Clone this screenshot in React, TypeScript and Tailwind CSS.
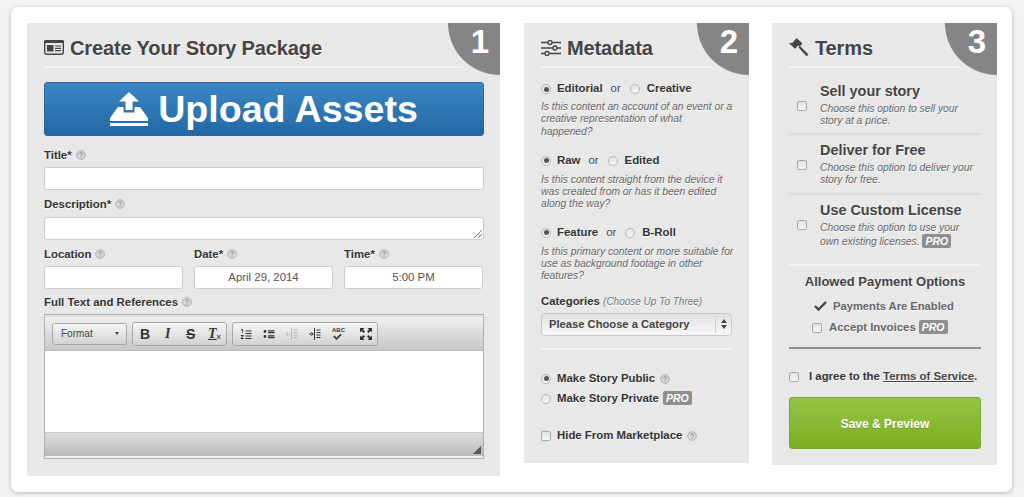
import type { ReactNode } from 'react';

const shadow = '[text-shadow:0_1px_0_rgba(255,255,255,0.8)]';

function Help({ className = '' }: { className?: string }) {
  return (
    <svg viewBox="0 0 11 11" className={`inline-block shrink-0 w-[10px] h-[10px] ${className}`}>
      <circle cx="5.5" cy="5.5" r="4.7" fill="#d8d8d8" stroke="#a8a8a8" strokeWidth="1" />
      <path d="M3.9 4.3c.1-1 .8-1.4 1.6-1.4.9 0 1.6.5 1.6 1.3 0 1.2-1.5 1.1-1.5 2.2" fill="none" stroke="#8c8c8c" strokeWidth="1" />
      <rect x="5" y="7.2" width="1.1" height="1.1" fill="#8c8c8c" />
    </svg>
  );
}

function Pro() {
  return (
    <span className="inline-block bg-[#8f8f8f] text-white text-[10.5px] leading-[14px] h-[14px] px-[3px] rounded-[2px] font-bold italic [text-shadow:none]">
      PRO
    </span>
  );
}

function Radio({ on = false }: { on?: boolean }) {
  return (
    <span className="shrink-0 w-[10px] h-[10px] rounded-full border border-[#b5b5b5] bg-gradient-to-b from-[#e4e4e4] to-[#f8f8f8] flex items-center justify-center">
      {on && <span className="w-[5px] h-[5px] rounded-full bg-[#555]" />}
    </span>
  );
}

function Check() {
  return <span className="shrink-0 block w-[10px] h-[10px] rounded-[2px] border border-[#a9a9a9] bg-gradient-to-b from-[#e2e2e2] to-[#f6f6f6]" />;
}

function Badge({ n }: { n: number }) {
  return (
    <div className="absolute top-0 right-0 w-[52px] h-[52px] bg-[#858585] rounded-bl-[52px] text-white font-bold text-[33px] leading-none pt-[2px] pr-[11px] text-right">
      {n}
    </div>
  );
}

function Heading({ icon, children, width }: { icon: ReactNode; children: ReactNode; width: string }) {
  return (
    <div className={`${width} h-[31px] border-b-2 border-[#f4f4f4] flex items-center gap-[6px] pb-[8px] text-[20px] tracking-[-0.12px] font-bold text-[#444] ${shadow}`}>
      {icon}
      <span>{children}</span>
    </div>
  );
}

function Label({ children, className = '' }: { children: ReactNode; className?: string }) {
  return (
    <div className={`text-[11.4px] leading-[14px] font-bold text-[#333] flex items-center gap-[4px] ${shadow} ${className}`}>
      {children}
    </div>
  );
}

function Field({ value, className = '' }: { value?: string; className?: string }) {
  return (
    <div className={`h-[23px] rounded-[3px] bg-white border border-[#ccc] text-[11.4px] text-[#555] flex items-center justify-center ${className}`}>
      {value}
    </div>
  );
}

function Choice({ a, b }: { a: string; b: string }) {
  return (
    <div className={`flex items-center h-[14px] text-[11.4px] text-[#333] ${shadow}`}>
      <Radio on />
      <b className="ml-[6px]">{a}</b>
      <span className="ml-[8px] text-[#444]">or</span>
      <span className="ml-[9px]"><Radio /></span>
      <b className="ml-[7px]">{b}</b>
    </div>
  );
}

function Hint({ children, className = '' }: { children: ReactNode; className?: string }) {
  return <p className={`text-[10.3px] leading-[12.3px] italic whitespace-nowrap text-[#666] ${shadow} ${className}`}>{children}</p>;
}

function Term({ title, children, className = '' }: { title: string; children: ReactNode; className?: string }) {
  return (
    <div className={`flex items-start ${className}`}>
      <span className="ml-[8px] mt-[18px]"><Check /></span>
      <div className="ml-[13px]">
        <div className={`text-[14.4px] leading-[17px] font-bold text-[#444] ${shadow}`}>{title}</div>
        <Hint className="mt-[3px]">{children}</Hint>
      </div>
    </div>
  );
}

function ToolGroup({ children, className = '' }: { children: ReactNode; className?: string }) {
  return (
    <div className={`h-[24px] flex items-center rounded-[3px] border border-[#a8a8a8] bg-gradient-to-b from-[#f6f6f6] to-[#d2d2d2] ${className}`}>
      {children}
    </div>
  );
}

function ListIcon({ kind, faded = false }: { kind: 'ol' | 'ul' | 'out' | 'in'; faded?: boolean }) {
  const c = faded ? '#b8b8b8' : '#333';
  return (
    <svg viewBox="0 0 12 12" className="w-[12px] h-[12px]" fill="none" stroke={c} strokeWidth="1.2">
      {kind === 'ol' && <path d="M1 1.5h1.4v3M1 7.5h2.4L1 10.5h2.5M5.500 3h6M5.500 5.500h6M5.500 8h6M5.500 10.500h6" strokeWidth="1" />}
      {kind === 'ul' && (
        <>
          <circle cx="2" cy="3.5" r="1.4" fill={c} stroke="none" />
          <circle cx="2" cy="8.5" r="1.4" fill={c} stroke="none" />
          <path d="M5 2.8h6.500M5 4.600h6.500M5 7.800h6.500M5 9.600h6.500" />
        </>
      )}
      {kind === 'out' && <path d="M5.500 0v12M7.500 2h4M7.500 4.500h4M7.500 7h4M7.500 9.500h4M0 6h4M2 4.200 .3 6 2 7.800" strokeWidth="1" />}
      {kind === 'in' && <path d="M5.500 0v12M7.500 2h4M7.500 4.500h4M7.500 7h4M7.500 9.500h4M0 6h4M2.400 4.200 4.200 6 2.400 7.800" strokeWidth="1" />}
    </svg>
  );
}

function Editor() {
  return (
    <div className="mt-[5px] h-[145px] border border-[#b0b0b0] flex flex-col bg-white">
      <div className="h-[35px] shrink-0 border-t-2 border-[#e4e4e4] bg-gradient-to-b from-[#f0f0f0] to-[#c8c8c8] flex items-center pl-[7px]">
        <ToolGroup className="w-[75px] !h-[22px] text-[10px] text-[#444] pl-[8px]">
          <span>Format</span>
          <span className="ml-auto mr-[7px] w-0 h-0 border-x-[2px] border-x-transparent border-t-[3px] border-t-[#444]" />
        </ToolGroup>
        <ToolGroup className="ml-[5px] w-[95px] text-[#333] font-bold text-[14px] leading-none">
          <span className="ml-[7px] w-[23px]">B</span>
          <span className="w-[23px] pl-[2px] italic [font-family:'Liberation_Serif',serif]">I</span>
          <span className="w-[22px] line-through">S</span>
          <span className="italic underline [font-family:'Liberation_Serif',serif]">T</span>
          <span className="text-[8px] mt-[7px] text-[#555]">x</span>
        </ToolGroup>
        <ToolGroup className="ml-[5px] w-[146px] gap-[11px] pl-[7px]">
          <ListIcon kind="ol" />
          <ListIcon kind="ul" />
          <ListIcon kind="out" faded />
          <ListIcon kind="in" />
          <span className="w-[19px] text-[6px] leading-[7px] font-bold text-[#333] flex flex-col">
            ABC
            <svg viewBox="0 0 12 6" className="w-[11px] h-[6px]"><path d="M2 2l3 3 5-5" fill="none" stroke="#333" strokeWidth="1.8" /></svg>
          </span>
          <svg viewBox="0 0 12 12" className="w-[12px] h-[12px] -ml-[2px]" fill="#333">
            <path d="M0 0h4.500L3 1.500l2 2-1.500 1.500-2-2L0 4.500zM12 0v4.500L10.500 3l-2 2L7 3.500l2-2L7.500 0zM0 12V7.500L1.500 9l2-2L5 8.500l-2 2L4.500 12zM12 12H7.500L9 10.500l-2-2L8.500 7l2 2L12 7.500z" />
          </svg>
        </ToolGroup>
      </div>
      <div className="flex-1 bg-white border-t border-[#bbb]" />
      <div className="h-[26px] shrink-0 border-t border-[#c8c8c8] border-b-2 border-b-[#eee] bg-gradient-to-b from-[#dedede] to-[#b9b9b9] flex items-end justify-end pr-[2px] pb-[2px]">
        <svg viewBox="0 0 8 8" className="w-[8px] h-[8px]"><path d="M8 0v8H0z" fill="#555" /></svg>
      </div>
    </div>
  );
}

export default function App() {
  return (
    <div className="w-[1024px] h-[497px] overflow-hidden bg-[#f3f3f3] pt-[7px] pl-[11px] [font-family:'Liberation_Sans',Arial,sans-serif]">
      <div className="w-[1001px] h-[485px] bg-white rounded-[7px] shadow-[0_1px_4px_rgba(0,0,0,0.25)] pt-[16px] pl-[16px] flex items-start">
        {/* Panel 1 */}
        <section className="relative w-[473px] h-[453px] bg-[#e8e8e8] pt-[14px] pl-[17px]">
          <Badge n={1} />
          <Heading
            width="w-[419px]"
            icon={
              <svg viewBox="0 0 20 15" className="w-[20px] h-[15px]">
                <rect x="0.7" y="0.7" width="18.600" height="13.600" rx="2" fill="#e8e8e8" stroke="#444" strokeWidth="1.400" />
                <rect x="0" y="0" width="20" height="3" rx="1.500" fill="#444" />
                <rect x="3" y="5" width="6.500" height="6.500" fill="#444" />
                <path d="M11 6h6M11 8.300h6M11 10.600h6" stroke="#444" strokeWidth="1.200" />
              </svg>
            }
          >
            Create Your Story Package
          </Heading>
          <div className="mt-[14px] w-[440px] h-[54px] rounded-[3px] border border-[#2a659b] bg-gradient-to-b from-[#3a87c4] to-[#2268a6] flex items-center justify-center gap-[10px] text-white text-[37.6px] font-bold">
            <svg viewBox="0 0 38 35" className="w-[38px] h-[35px]" fill="#fff">
              <path d="M19 0l10 9.500h-6.500V18h-7V9.500H9z" />
              <path d="M8 15h5.500v5.500h11V15H30l8 11v3H0v-3z" />
              <rect x="0" y="31" width="38" height="3" />
            </svg>
            <span>Upload Assets</span>
          </div>
          <Label className="mt-[12px]">Title* <Help /></Label>
          <Field className="mt-[5px] w-[440px]" />
          <Label className="mt-[7px]">Description* <Help /></Label>
          <div className="relative mt-[6px] w-[440px]">
            <Field />
            <svg viewBox="0 0 8 8" className="absolute right-[2px] bottom-[2px] w-[8px] h-[8px]"><path d="M0 8l8-8M4 8l4-4" stroke="#666" strokeWidth="0.900" /></svg>
          </div>
          <div className="mt-[7px] flex gap-[11px]">
            {[['Location', ''], ['Date*', 'April 29, 2014'], ['Time*', '5:00 PM']].map(([label, value]) => (
              <div key={label} className="w-[139px]">
                <Label>{label} <Help /></Label>
                <Field value={value} className="mt-[5px]" />
              </div>
            ))}
          </div>
          <Label className="mt-[6px]">Full Text and References <Help /></Label>
          <div className="w-[440px]"><Editor /></div>
        </section>

        {/* Panel 2 */}
        <section className="relative ml-[24px] w-[225px] h-[440px] bg-[#e8e8e8] pt-[14px] pl-[17px]">
          <Badge n={2} />
          <Heading
            width="w-[171px]"
            icon={
              <svg viewBox="0 0 20 16" className="w-[20px] h-[16px]" fill="none" stroke="#444" strokeWidth="1.300">
                <path d="M0 2.500h20M0 8h20M0 13.500h20" />
                <circle cx="9" cy="2.500" r="2" fill="#e8e8e8" />
                <circle cx="14" cy="8" r="2" fill="#e8e8e8" />
                <circle cx="6" cy="13.500" r="2" fill="#e8e8e8" />
              </svg>
            }
          >
            Metadata
          </Heading>
          <div className="w-[191px]">
            <div className="mt-[14px]"><Choice a="Editorial" b="Creative" /></div>
            <Hint className="mt-[5px]">Is this content an account of an event or a<br />creative representation of what<br />happened?</Hint>
            <div className="mt-[16px]"><Choice a="Raw" b="Edited" /></div>
            <Hint className="mt-[6px]">Is this content straight from the device it<br />was created from or has it been edited<br />along the way?</Hint>
            <div className="mt-[15px]"><Choice a="Feature" b="B-Roll" /></div>
            <Hint className="mt-[6px]">Is this primary content or more suitable for<br />use as background footage in other<br />features?</Hint>
            <div className={`mt-[11px] text-[11.4px] leading-[14px] text-[#333] ${shadow}`}>
              <b>Categories</b> <i className="text-[10px] text-[#777]">(Choose Up To Three)</i>
            </div>
            <div className="mt-[4px] h-[23px] rounded-[4px] border border-[#c8c8c8] bg-gradient-to-b from-[#e0e0e0] to-[#fafafa] flex items-center text-[11.2px] font-bold text-[#444] pl-[7px]">
              <span>Please Choose a Category</span>
              <div className="ml-auto w-[16px] h-[17px] border-l border-[#ccc] flex flex-col items-center justify-center gap-[2px]">
                <span className="w-0 h-0 border-x-[3px] border-x-transparent border-b-[4px] border-b-[#444]" />
                <span className="w-0 h-0 border-x-[3px] border-x-transparent border-t-[4px] border-t-[#444]" />
              </div>
            </div>
            <div className="mt-[12px] h-[2px] bg-[#f4f4f4]" />
            <div className={`mt-[22px] h-[14px] flex items-center gap-[6px] text-[11.4px] font-bold text-[#333] ${shadow}`}>
              <Radio on /><span>Make Story Public</span><Help className="-ml-[1px]" />
            </div>
            <div className={`mt-[6px] h-[14px] flex items-center gap-[6px] text-[11.4px] font-bold text-[#333] ${shadow}`}>
              <Radio /><span>Make Story Private</span><span className="-ml-[2px]"><Pro /></span>
            </div>
            <div className={`mt-[23px] h-[14px] flex items-center gap-[6px] text-[11.4px] font-bold text-[#333] ${shadow}`}>
              <Check /><span>Hide From Marketplace</span><Help className="-ml-[1px]" />
            </div>
          </div>
        </section>

        {/* Panel 3 */}
        <section className="relative ml-[23px] w-[225px] h-[442px] bg-[#e8e8e8] pt-[14px] pl-[17px]">
          <Badge n={3} />
          <Heading
            width="w-[171px]"
            icon={
              <svg viewBox="0 0 20 19" className="w-[20px] h-[19px]" fill="#444">
                <path d="M7.500 0l6 5.500-3 3.200-1.300-1.200-3.200 3.300L0 5.300l3.500-.6z" />
                <path d="M9.500 9.500l1.500-1.500 8.500 8.500-1.800 1.800z" />
              </svg>
            }
          >
            Terms
          </Heading>
          <div className="w-[192px]">
            <Term title="Sell your story" className="h-[67px] pt-[15px] border-b-2 border-[#dcdcdc]">
              Choose this option to sell your<br />story at a price.
            </Term>
            <Term title="Deliver for Free" className="h-[60px] pt-[7px] border-b-2 border-[#dcdcdc]">
              Choose this option to deliver your<br />story for free.
            </Term>
            <Term title="Use Custom License" className="h-[71px] pt-[7px] border-b-2 border-[#f4f4f4]">
              Choose this option to use your<br />own existing licenses. <Pro />
            </Term>
            <div className={`mt-[8px] text-center text-[13px] leading-[16px] font-bold text-[#444] ${shadow}`}>Allowed Payment Options</div>
            <div className={`mt-[9px] h-[14px] flex items-center pl-[25px] gap-[6px] text-[11.2px] font-bold text-[#666] ${shadow}`}>
              <svg viewBox="0 0 13 10" className="w-[13px] h-[10px]"><path d="M1 5l3.500 3.500L12 1" fill="none" stroke="#444" strokeWidth="2.400" /></svg>
              <span>Payments Are Enabled</span>
            </div>
            <div className={`mt-[8px] h-[14px] flex items-center pl-[23px] gap-[7px] text-[11.4px] font-bold text-[#666] ${shadow}`}>
              <Check /><span>Accept Invoices</span><span className="-ml-[4px]"><Pro /></span>
            </div>
            <div className="mt-[12px] h-[2px] bg-[#8f8f8f]" />
            <div className={`mt-[21px] h-[14px] flex items-center gap-[10px] text-[11.4px] font-bold text-[#333] ${shadow}`}>
              <Check />
              <span>I agree to the <span className="underline text-[#444]">Terms of Service</span>.</span>
            </div>
            <div className="mt-[13px] h-[52px] pt-[1px] rounded-[3px] border border-[#7ba62c] bg-gradient-to-b from-[#95c445] to-[#7eae20] flex items-center justify-center text-white text-[12px] font-bold [text-shadow:0_1px_0_rgba(0,0,0,0.2)]">
              Save &amp; Preview
            </div>
          </div>
        </section>
      </div>
    </div>
  );
}
